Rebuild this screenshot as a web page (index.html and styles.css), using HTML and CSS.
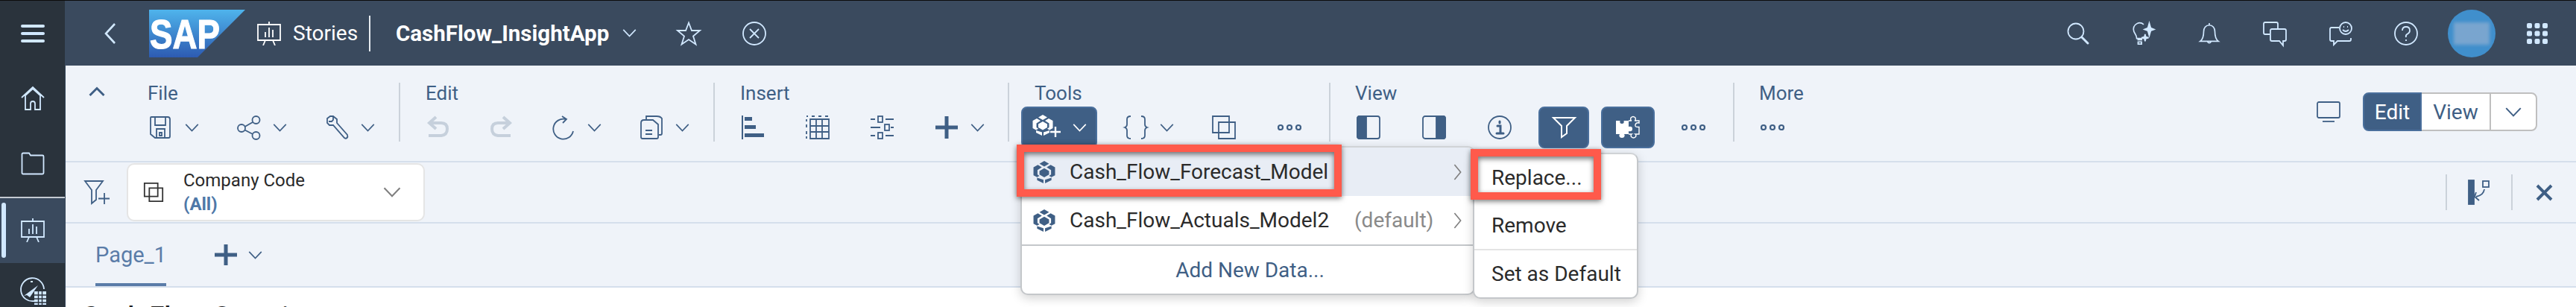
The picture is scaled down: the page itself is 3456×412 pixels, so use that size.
FILE: index.html
```html
<!DOCTYPE html>
<html lang="en">
<head>
<meta charset="utf-8">
<title>CashFlow_InsightApp</title>
<link rel="stylesheet" href="styles.css">
</head>
<body>
<svg class="defs" aria-hidden="true">
  <symbol id="chev" viewBox="0 0 20 12"><polyline points="1,1 10,10.5 19,1"/></symbol>
  <symbol id="chevr" viewBox="0 0 12 24"><polyline points="1.5,1 10.5,12 1.5,23"/></symbol>
  <symbol id="board" viewBox="0 0 32 32"><path d="M16 0v4M1 4h30v21H1zM11 25l-3 7M21 25l3 7M11 21v-7M16 21V8M21 21v-10"/></symbol>
  <symbol id="copy" viewBox="0 0 32 32"><path d="M1 1h22v22H1zM9 9h22v22H9z"/></symbol>
  <symbol id="more" viewBox="0 0 32 10"><circle cx="4" cy="5" r="3"/><circle cx="16" cy="5" r="3"/><circle cx="28" cy="5" r="3"/></symbol>
  <symbol id="cube" viewBox="0 0 28 28"><path d="M14 0l6 3.5L14 7 8 3.5zM6 5l5 3-5.5 3.5V17L8 18.7 5 20.4.5 18V8zM22 5l-5 3 5.500 3.500V17L20 18.700l3 1.700 4.500-2.400V8zM14 9l6 3.500V17l-6 3.500L8 17v-4.500zM5 21l8 2.500V28l-8-4zM23 21l-8 2.500V28l8-4z"/></symbol>
</svg>
<div class="app">
  <nav class="side">
    <div class="side-item">
      <svg class="ic-burger" viewBox="0 0 32 24"><rect y="0" width="32" height="4" rx="2"/><rect y="10" width="32" height="4" rx="2"/><rect y="20" width="32" height="4" rx="2"/></svg>
    </div>
    <div class="side-item">
      <svg class="ic-line i32" viewBox="0 0 32 32"><path d="M1 15L16 1l15 14M5 13l11-10 11 10M6 13v18h7v-8q0-3 3-3t3 3v8h7V13"/></svg>
    </div>
    <div class="side-item">
      <svg class="ic-line i32" viewBox="0 0 32 32"><path d="M1.500 3q0-1.500 1.500-1.500h8l2 3h16q1.500 0 1.500 1.500v22q0 1.500-1.500 1.500H3q-1.500 0-1.500-1.500z"/></svg>
    </div>
    <div class="side-item active">
      <svg class="ic-line i32 board-side"><use href="#board"/></svg>
    </div>
    <div class="side-item">
      <svg class="ic-line ic-compass" viewBox="0 0 36 36"><path d="M20 31a15.500 15.500 0 1 1 13-16M15 5h3"/><path class="fill" d="M6 24l19-14-11 16-4-3z"/><rect class="fill" x="20" y="18" width="16" height="18"/><path class="grid" d="M25.500 18v18M30.500 18v18M20 23h16M20 28h16M20 33h16"/></svg>
    </div>
  </nav>

  <main class="main">
    <header class="shell">
      <svg class="ic-line back" viewBox="0 0 16 28"><polyline points="14,1 2,14 14,27"/></svg>
      <svg class="logo" viewBox="0 0 129 64">
        <defs><linearGradient id="sapg" x1="0" y1="0" x2="0" y2="1"><stop offset="0" stop-color="#4fb4ec"/><stop offset="1" stop-color="#2d5bb2"/></linearGradient></defs>
        <polygon points="0,0 129,0 65,64 0,64" fill="url(#sapg)"/>
        <text class="logo-text" x="1" y="52" textLength="94" lengthAdjust="spacingAndGlyphs">SAP</text>
      </svg>
      <svg class="ic-line i32 board-top"><use href="#board"/></svg>
      <span class="shell-app">Stories</span>
      <span class="shell-div"></span>
      <span class="shell-title">CashFlow_InsightApp</span>
      <svg class="ic-line chev title-chev"><use href="#chev"/></svg>
      <svg class="ic-line i32 star" viewBox="0 0 32 32"><path d="M16 1.500l4 10.500h11l-9 7.500 3.500 11L16 24l-9.500 6.500 3.500-11L1 12h11z"/></svg>
      <svg class="ic-line i32 closec" viewBox="0 0 32 32"><circle cx="16" cy="16" r="15"/><path d="M10 10l12 12M22 10L10 22"/></svg>
      <div class="shell-right">
        <span class="cell"><svg class="ic-line i30" viewBox="0 0 30 30"><circle cx="12" cy="12" r="10.500"/><path class="thick" d="M20 20l8 8"/></svg></span>
        <span class="cell"><svg class="ic-line i30" viewBox="0 0 30 32"><path d="M15 3a9 9 0 0 0-10-1C0 5 0 10 1 13c1 3 4 5 4 10h8M6 25h7M7 28h5v3H7z"/><path class="fill" d="M23 1l2 7 5 2-5 2-2 7-2-7-5-2 5-2zM17 17l1 4 4 1-4 1-1 4-1-4-4-1 4-1z"/></svg></span>
        <span class="cell"><svg class="ic-line i30" viewBox="0 0 30 32"><path d="M15 1v3M15 4c-5 0-8 4-8 9 0 7-1 11-5 14h26c-4-3-5-7-5-14 0-5-3-9-8-9zM12 27q3 5 6 0"/></svg></span>
        <span class="cell"><svg class="ic-line i32" viewBox="0 0 32 32"><path d="M9 17H3q-2 0-2-2V3q0-2 2-2h15q2 0 2 2v7M12 10h17q2 0 2 2v12q0 2-2 2h-2v6l-5-6H12q-2 0-2-2V12q0-2 2-2z"/></svg></span>
        <span class="cell"><svg class="ic-line i32" viewBox="0 0 32 32"><path d="M14 8H4q-2 0-2 2v14q0 2 2 2h3v5l5-5h16q2 0 2-2v-2"/><circle cx="23" cy="9" r="8"/><path d="M19 11q4 4 8 0M20 7h1M25 7h1"/></svg></span>
        <span class="cell"><svg class="ic-line i32" viewBox="0 0 32 32"><circle cx="16" cy="16" r="15"/><path d="M11 12q0-5 5-5t5 5q0 3-3 4.500T16 21M16 24v2"/></svg></span>
        <span class="cell"><span class="avatar"><span class="avatar-img"></span></span></span>
        <span class="cell"><svg class="ic-fill i28" viewBox="0 0 28 28"><rect width="7" height="7" rx="2"/><rect x="10.500" width="7" height="7" rx="2"/><rect x="21" width="7" height="7" rx="2"/><rect y="10.500" width="7" height="7" rx="2"/><rect x="10.500" y="10.500" width="7" height="7" rx="2"/><rect x="21" y="10.500" width="7" height="7" rx="2"/><rect y="21" width="7" height="7" rx="2"/><rect x="10.500" y="21" width="7" height="7" rx="2"/><rect x="21" y="21" width="7" height="7" rx="2"/></svg></span>
      </div>
    </header>

    <section class="toolbar">
      <div class="collapse"><svg class="ic-line thick-up" viewBox="0 0 22 12"><polyline points="1.500,11 11,1.500 20.500,11"/></svg></div>

      <div class="grp g-file">
        <div class="grp-label">File</div>
        <div class="grp-row">
          <span class="tool wide"><svg class="ic-line i32" viewBox="0 0 32 32"><path d="M3 2h22q3 0 3 3v23q0 2-2 2H8l-6-5V3q0-1 1-1zM8 2v11h14V2M10 30V18h11v12M14 23h3v4h-3z"/></svg><svg class="ic-line chev"><use href="#chev"/></svg></span>
          <span class="tool wide"><svg class="ic-line i32" viewBox="0 0 32 32"><circle cx="25.500" cy="6" r="5"/><circle cx="6" cy="17" r="5"/><circle cx="25.500" cy="27" r="5"/><path d="M21 9L10.500 15M10.500 19.500L21 25"/></svg><svg class="ic-line chev"><use href="#chev"/></svg></span>
          <span class="tool wide"><svg class="ic-line i32" viewBox="0 0 32 32"><path d="M11 1H7L3 4v6l3 3h5l15 17q2 1.500 3.500 0t.500-4L16 10V5zM11 1v5l-2 2H5"/></svg><svg class="ic-line chev"><use href="#chev"/></svg></span>
        </div>
      </div>

      <div class="grp g-edit">
        <div class="grp-label">Edit</div>
        <div class="grp-row">
          <span class="tool"><svg class="ic-dim i32" viewBox="0 0 32 32"><path d="M13 2L4 10l9 8M4 10h16q8 0 8 8t-8 9H3"/></svg></span>
          <span class="tool"><svg class="ic-dim i32" viewBox="0 0 32 32"><path d="M19 2l9 8-9 8M28 10H12q-8 0-8 8t8 9h17"/></svg></span>
          <span class="tool wide"><svg class="ic-line i32" viewBox="0 0 32 32"><path d="M19 5a13.500 13.500 0 1 0 10 16M14 1l6 4-5 5"/></svg><svg class="ic-line chev"><use href="#chev"/></svg></span>
          <span class="tool wide"><svg class="ic-line i32" viewBox="0 0 32 32"><path d="M9 5V1h14q5 0 7 3v20q0 2-2 2h-2M2 10q0-4 4-4h12l7 6v17q0 2-2 2H4q-2 0-2-2zM8 20h9M8 25h9"/></svg><svg class="ic-line chev"><use href="#chev"/></svg></span>
        </div>
      </div>

      <div class="grp g-insert">
        <div class="grp-label">Insert</div>
        <div class="grp-row">
          <span class="tool"><svg class="ic-fill i32" viewBox="0 0 32 32"><rect x="1" width="2" height="32"/><rect x="5" y="2" width="10" height="5"/><rect x="5" y="13" width="15" height="5"/><rect x="5" y="24" width="26" height="5"/></svg></span>
          <span class="tool"><svg class="ic-line i32" viewBox="0 0 32 32"><path d="M1 1h2M8 1h4M17 1h4M26 1h4M1 5v3M1 12v4M1 21v4M1 28v3M6 5h25v26H6zM14 5v26M22 5v26M6 14h25M6 22h25"/></svg></span>
          <span class="tool"><svg class="ic-line i32" viewBox="0 0 32 32"><path d="M1 5h6M21 5h11M1 16h13M28 16h4M1 27h6M21 27h11"/><rect x="11" y="1" width="6" height="8"/><rect x="20" y="12" width="6" height="8"/><rect x="11" y="23" width="6" height="8"/></svg></span>
          <span class="tool wide"><svg class="ic-fill i32" viewBox="0 0 32 32"><rect x="13.500" y="1" width="5" height="30"/><rect x="1" y="13.500" width="30" height="5"/></svg><svg class="ic-line chev"><use href="#chev"/></svg></span>
        </div>
      </div>

      <div class="grp g-tools">
        <div class="grp-label">Tools</div>
        <div class="grp-row">
          <span class="tool-btn model-btn"><svg class="ic-cube cube-btn" viewBox="0 0 38 34"><use href="#cube" width="28" height="28"/><path class="plus" d="M31 16v14M24 23h14"/></svg><svg class="ic-line chev"><use href="#chev"/></svg></span>
          <span class="tool wide"><svg class="ic-line i32" viewBox="0 0 32 32"><path d="M9 1Q4 1 4 5v7q0 3-3 4 3 1 3 4v7q0 4 5 4M23 1q5 0 5 4v7q0 3 3 4-3 1-3 4v7q0 4-5 4"/></svg><svg class="ic-line chev"><use href="#chev"/></svg></span>
          <span class="tool"><svg class="ic-line i32"><use href="#copy"/></svg></span>
          <span class="tool"><svg class="ic-line i-more"><use href="#more"/></svg></span>
        </div>
      </div>

      <div class="grp g-view">
        <div class="grp-label">View</div>
        <div class="grp-row">
          <span class="tool"><svg class="ic-line i32" viewBox="0 0 32 32"><rect x="1" y="1" width="30" height="30" rx="3"/><path class="fill" d="M1 4q0-3 3-3h9v30H4q-3 0-3-3z"/></svg></span>
          <span class="tool"><svg class="ic-line i32" viewBox="0 0 32 32"><rect x="1" y="1" width="30" height="30" rx="3"/><path class="fill" d="M31 4q0-3-3-3h-9v30h9q3 0 3-3z"/></svg></span>
          <span class="tool view-info"><svg class="ic-line i32" viewBox="0 0 32 32"><circle cx="16" cy="16" r="15"/><path class="thick" d="M13 14h4v10M12 24h9M16 8v2"/></svg></span>
          <span class="tool-btn filter-btn"><svg class="ic-white i32" viewBox="0 0 32 32"><path d="M2 3h29L20 14v10l-7 5V14z"/></svg></span>
          <span class="tool-btn puzzle-btn"><svg class="ic-puzzle" viewBox="0 0 32 32"><path class="solid" d="M0 7h5.500q-1 4 2.500 4t2.500-4H17v8q5-1 5 3t-5 3v4H11q1.500 1.500 0 4-3 2-6 0-1.500-2.500 0-4H0z"/><path class="hollow" d="M17 7h4q-2-.5-1-4 3-3 6 0 1 3.500-1 4h6v3q-4-1-5 2.500t5 3V25h-5q1.500 1 .5 3.500-3 3-6 0-1-2.500.5-3.500h-4"/></svg></span>
          <span class="tool"><svg class="ic-line i-more"><use href="#more"/></svg></span>
        </div>
      </div>

      <div class="grp g-more">
        <div class="grp-label">More</div>
        <div class="grp-row"><span class="tool"><svg class="ic-line i-more"><use href="#more"/></svg></span></div>
      </div>

      <div class="tb-right">
        <svg class="ic-line monitor" viewBox="0 0 32 28"><rect x="1" y="1" width="30" height="21" rx="2"/><path d="M8 27h16"/></svg>
        <div class="seg">
          <span class="seg-on">Edit</span>
          <span class="seg-off">View</span>
          <span class="seg-chev"><svg class="ic-line seg-chev-ic"><use href="#chev"/></svg></span>
        </div>
      </div>
    </section>

    <section class="filterbar">
      <svg class="ic-line filter-add" viewBox="0 0 34 32"><path d="M1 1h24L16 13v13l-6 5V13zM27 17v15M19 24.500h15"/></svg>
      <div class="fcard">
        <svg class="ic-dark card-copy"><use href="#copy"/></svg>
        <div class="fcard-text">
          <div class="fcard-name">Company Code</div>
          <div class="fcard-val">(All)</div>
        </div>
        <svg class="ic-grey card-chev"><use href="#chev"/></svg>
      </div>
      <div class="fb-right">
        <span class="fb-div"></span>
        <svg class="ic-line fb-link" viewBox="0 0 28 32"><rect class="fill" x="0" y="0" width="7" height="32"/><rect x="19" y="1" width="8" height="8"/><path d="M21 12q-1 8-11 10M10 16l-2 6 6 5"/></svg>
        <span class="fb-div"></span>
        <svg class="ic-x" viewBox="0 0 23 23"><path d="M2 2l19 19M21 2L2 21"/></svg>
      </div>
    </section>

    <section class="tabs">
      <span class="tab">Page_1</span>
      <svg class="ic-fill tab-plus" viewBox="0 0 30 28"><rect x="12.500" width="5" height="28"/><rect y="11.500" width="30" height="5"/></svg>
      <svg class="ic-line chev tab-chev"><use href="#chev"/></svg>
    </section>

    <section class="canvas"><h1 class="page-title">Cash Flow Overview</h1></section>
  </main>

  <div class="menu menu-models">
    <div class="mi mi-hover"><svg class="ic-cube-blue"><use href="#cube"/></svg><span class="mi-label">Cash_Flow_Forecast_Model</span><svg class="ic-grey mi-chev"><use href="#chevr"/></svg></div>
    <div class="mi"><svg class="ic-cube-blue"><use href="#cube"/></svg><span class="mi-label">Cash_Flow_Actuals_Model2</span><span class="mi-default">(default)</span><svg class="ic-grey mi-chev"><use href="#chevr"/></svg></div>
    <div class="mi mi-add">Add New Data...</div>
  </div>

  <div class="menu menu-sub">
    <div class="si">Replace...</div>
    <div class="si si-sep">Remove</div>
    <div class="si">Set as Default</div>
  </div>

  <div class="callout call-a"></div>
  <div class="callout call-b"></div>
</div>
</body>
</html>
```

FILE: styles.css
```css
* { box-sizing: border-box; }
html, body { margin: 0; padding: 0; width: 3456px; height: 412px; overflow: hidden; }
body { font-family: Roboto, "Noto Sans", sans-serif; background: #fff; color: #222; }
svg { display: block; flex: none; overflow: visible; }
.defs { position: absolute; width: 0; height: 0; }

.app { position: relative; display: flex; width: 3456px; height: 412px; border-top: 1px solid #0c0c0c; overflow: hidden; }

/* icon paint */
.ic-line { fill: none; stroke: currentColor; stroke-width: 1.8; }
.ic-line .fill { fill: currentColor; }
.ic-line .thick { stroke-width: 3; stroke-linecap: round; }
.ic-fill { fill: currentColor; }
.ic-dim { fill: none; stroke: #c6d0dc; stroke-width: 4; }
.ic-white { fill: none; stroke: #fff; stroke-width: 2; }
.ic-dark { fill: none; stroke: #333; stroke-width: 2.2; }
.ic-grey { fill: none; stroke: #808080; stroke-width: 1.8; }
.i32 { width: 32px; height: 32px; }
.i30 { width: 30px; height: 30px; }
.i28 { width: 28px; height: 28px; }
.i-more { width: 32px; height: 10px; stroke-width: 2.2; }
.chev { width: 19px; height: 11px; }

/* sidebar */
.side { width: 88px; flex: none; display: flex; flex-direction: column; background: #2a333c; border-right: 1px solid #3a4a5e; color: #d1e8ff; }
.side-item { height: 87.500px; flex: none; display: flex; align-items: center; justify-content: center; }
.side-item.active { position: relative; background: #3a4a5e; border-top: 2px solid #c4cbd2; height: 89px; }
.side-item.active::before { content: ""; position: absolute; left: 2px; top: 6px; bottom: 7px; width: 6px; border-radius: 3px; background: #d1e8ff; }
.ic-burger { width: 32px; height: 24px; fill: currentColor; }
.ic-compass { width: 36px; height: 36px; margin-top: -11px; }
.ic-compass .fill { fill: #d1e8ff; stroke: none; }
.ic-compass .grid { stroke: #2a333c; stroke-width: 1.4; }

/* shell */
.main { flex: 1; min-width: 0; display: flex; flex-direction: column; }
.shell { height: 87px; flex: none; display: flex; align-items: center; padding-left: 52px; background: #3a4a5e; color: #d1e8ff; }
.back { width: 16px; height: 28px; stroke-width: 2.6; }
.logo { width: 129px; height: 64px; margin-left: 44px; }
.logo-text { font-family: "Liberation Sans", sans-serif; font-weight: 700; font-size: 56px; fill: #fff; stroke: #fff; stroke-width: 1.2; }
.board-top { margin-left: 16px; color: #fff; }
.shell-app { margin-left: 16px; width: 84px; font-size: 28px; color: #fff; white-space: nowrap; }
.shell-div { width: 2px; height: 48px; margin-left: 18px; background: #e6ebf0; }
.shell-title { margin-left: 34px; font-size: 29.500px; font-weight: 700; color: #fff; }
.title-chev { margin-left: 18px; }
.star { margin-left: 54px; }
.closec { margin-left: 56px; }
.shell-right { margin-left: auto; display: flex; align-items: center; padding-right: 8px; }
.cell { width: 88px; height: 87px; display: flex; align-items: center; justify-content: center; }
.avatar { width: 64px; height: 64px; border-radius: 50%; background: #408fcc; display: flex; align-items: center; justify-content: center; }
.avatar-img { width: 48px; height: 30px; background: #79a5cf; filter: blur(2px); }

/* toolbar */
.toolbar { height: 130px; flex: none; display: flex; align-items: flex-start; padding-top: 23px; background: #eff3f9; border-bottom: 2px solid #d5dfec; color: #3f5f85; }
.collapse { width: 110px; flex: none; padding: 6px 0 0 31px; }
.thick-up { width: 22px; height: 12px; stroke-width: 3; }
.grp { height: 79px; flex: none; border-right: 2px solid #cbd2da; padding-left: 34px; }
.g-file { width: 339px; padding-left: 0; }
.g-edit { width: 422px; }
.g-insert { width: 395px; }
.g-tools { width: 431px; }
.g-view { width: 542px; padding-left: 33px; }
.g-more { width: 130px; padding-left: 33px; border-right: 0; }
.grp-label { height: 32px; font-size: 26px; line-height: 28px; }
.grp-row { height: 56px; display: flex; align-items: center; }
.g-file .grp-row { margin-left: 2px; }
.g-edit .grp-row { margin-left: 1px; }
.g-insert .grp-row { margin-left: 1px; }
.g-view .grp-row { margin-left: 2px; }
.g-more .grp-row { margin-left: 2px; }
.tool { width: 84px; flex: none; display: flex; align-items: center; }
.g-insert .tool { width: 86.700px; }
.g-tools .tool, .g-view .tool { width: 88px; }
.tool.wide, .g-tools .tool.wide, .g-insert .tool.wide { width: 118px; gap: 16px; }
.tool-btn { height: 56px; display: flex; align-items: center; justify-content: center; flex: none; background: #3f5f85; border: 2px solid #4a6f9c; border-radius: 8px; color: #fff; }
.model-btn { width: 102px; margin-left: -18px; margin-right: 36px; height: 56px; gap: 16px; }
.model-btn .chev { stroke: #fff; }
.ic-cube { width: 38px; height: 34px; fill: #fff; }
.plus { fill: none; stroke: #fff; stroke-width: 2.4; }
.g-view .view-info { width: 68px; }
.filter-btn { width: 68px; margin-right: 16px; }
.puzzle-btn { width: 72px; margin-right: 36px; }
.ic-puzzle { width: 32px; height: 32px; }
.ic-puzzle .solid { fill: #fff; }
.ic-puzzle .hollow { fill: none; stroke: #fff; stroke-width: 1.4; }
.tb-right { margin-left: auto; display: flex; align-items: center; gap: 30px; padding: 13px 52px 0 0; }
.monitor { width: 32px; height: 28px; }
.seg { display: flex; height: 52px; font-size: 28px; }
.seg-on { width: 79px; display: flex; align-items: center; justify-content: center; background: #3f5f85; border: 2px solid #4a6f9c; border-radius: 8px 0 0 8px; color: #fff; }
.seg-off { width: 91px; display: flex; align-items: center; justify-content: center; background: #fff; border: solid #bfbfbf; border-width: 2px 0; }
.seg-chev { width: 64px; display: flex; align-items: center; justify-content: center; background: #fff; border: 2px solid #bfbfbf; border-radius: 0 8px 8px 0; }
.seg-chev-ic { width: 24px; height: 13px; }

/* filter bar */
.filterbar { height: 82px; flex: none; display: flex; align-items: center; padding-left: 25px; background: #eff3f9; border-bottom: 2px solid #d5dfec; color: #3f5f85; }
.filter-add { width: 34px; height: 32px; }
.fcard { width: 400px; height: 78px; margin-left: 23px; display: flex; align-items: center; padding-left: 18px; background: #fff; border: 2px solid #e5e5e5; border-radius: 10px; }
.card-copy { width: 32px; height: 26px; }
.fcard-text { margin-left: 24px; width: 268px; }
.fcard-name { font-size: 24px; line-height: 32px; color: #2a2a2a; }
.fcard-val { font-size: 24px; line-height: 32px; font-weight: 700; color: #4f78a8; }
.card-chev { width: 24px; height: 14px; }
.fb-right { margin-left: auto; display: flex; align-items: center; padding-right: 31px; }
.fb-div { width: 2px; height: 48px; background: #cbd2da; }
.fb-link { width: 28px; height: 32px; margin: 0 29px 0 29px; stroke-width: 1.8; }
.ic-x { width: 23px; height: 23px; margin-left: 31px; fill: none; stroke: #3f5f85; stroke-width: 4; }

/* tabs */
.tabs { height: 86px; flex: none; display: flex; align-items: center; padding-left: 40px; background: #eff3f9; border-bottom: 2px solid #d5dfec; color: #3f5f85; }
.tab { height: 84px; display: flex; align-items: center; font-size: 29px; color: #5a7ca8; border-bottom: 4px solid #5a7ca8; padding-top: 4px; }
.tab-plus { width: 30px; height: 28px; margin-left: 65px; }
.tab-chev { margin-left: 15px; }

.canvas { flex: 1; background: #fff; padding: 18px 0 0 22px; }
.page-title { margin: 0; font-size: 36px; font-weight: 500; color: #1f1f1f; }

/* floating menus */
.menu { position: absolute; background: #fff; border: 2px solid #c4c7ca; border-top-color: #d0d3d6; box-shadow: 0 4px 14px rgba(0,0,0,.18); font-size: 28px; color: #2b2b2b; }
.menu-models { left: 1369px; top: 195px; width: 610px; height: 200px; border-radius: 10px; display: flex; flex-direction: column; }
.menu-sub { left: 1976px; top: 204px; width: 222px; height: 196px; border-radius: 10px; display: flex; flex-direction: column; }
.mi { height: 65px; flex: none; display: flex; align-items: center; padding-left: 15px; }
.mi-hover { background: #e8edf5; border-radius: 8px 8px 0 0; }
.ic-cube-blue { width: 30px; height: 32px; fill: #3f5f85; }
.mi-label { margin-left: 19px; width: 383px; }
.mi-default { position: absolute; left: 446px; color: #8a8a8a; }
.mi-chev { position: absolute; left: 579px; width: 11px; height: 22px; }
.mi-add { height: 66px; border-top: 2px solid #c4c7ca; justify-content: center; color: #3f5f85; padding: 0 0 0 6px; }
.si { height: 63px; flex: none; display: flex; align-items: center; padding-left: 23px; }
.si-sep { border-bottom: 2px solid #e4e4e4; height: 66px; }
.callout { position: absolute; border: 10px solid #ff5a4b; box-shadow: 0 2px 7px rgba(0,0,0,.55), inset 0 3px 7px rgba(0,0,0,.55); }
.call-a { left: 1364px; top: 193px; width: 436px; height: 70px; }
.call-b { left: 1973px; top: 199px; width: 175px; height: 68px; }
```
